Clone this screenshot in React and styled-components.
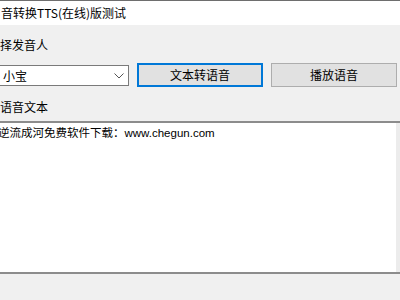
import React from "react";
import { useState } from "react";
import styled, { createGlobalStyle } from "styled-components";

const Global = createGlobalStyle`
  html, body {
    margin: 0;
    padding: 0;
    background: #f0f0f0;
    overflow: hidden;
  }
  * {
    box-sizing: border-box;
  }
`;

const Window = styled.div`
  width: 400px;
  height: 300px;
  display: flex;
  flex-direction: column;
  font-family: "Noto Sans CJK SC", "Noto Sans", sans-serif;
  font-size: 12px;
  color: #000;
  background: #f0f0f0;
  overflow: hidden;
`;

const TitleBar = styled.div`
  height: 25px;
  border-top: 1px solid #6e6e6e;
  background: #ffffff;
  display: flex;
  align-items: center;
  padding-left: 1px;
  line-height: 16px;
`;

const Body = styled.div`
  display: flex;
  flex-direction: column;
`;

const Label = styled.div`
  line-height: 16px;
  height: 16px;
  margin-top: ${(p) => p.$top}px;
  white-space: nowrap;
`;

const Row = styled.div`
  display: flex;
  align-items: flex-start;
  gap: 8px;
  margin-top: 10px;
  height: 24px;
`;

const Combo = styled.div`
  width: 130px;
  height: 21px;
  margin-top: 2px;
  margin-left: -1px;
  background: #fff;
  border: 1px solid #7a7a7a;
  display: flex;
  align-items: center;
  justify-content: space-between;
  padding: 0 4px 0 3px;
  line-height: 16px;
`;

const Button = styled.button`
  width: 126px;
  height: 24px;
  margin: 0;
  padding: 0;
  font: inherit;
  color: #000;
  background: #e1e1e1;
  border: ${(p) => (p.$focused ? "2px solid #0078d7" : "1px solid #adadad")};
  line-height: 16px;
  cursor: pointer;
`;

const TextBox = styled.div`
  margin-top: 6px;
  height: 153px;
  width: 402px;
  margin-left: -2px;
  border-top: 2px solid #8c8c8c;
  border-bottom: 2px solid #8c8c8c;
  display: flex;
`;

const TextArea = styled.textarea`
  flex: 1;
  height: 100%;
  border: none;
  outline: none;
  resize: none;
  margin: 0;
  padding: 2px 0 0 0;
  font-family: "Liberation Sans", "Noto Sans CJK SC", sans-serif;
  font-size: 11.5px;
  line-height: 16px;
  background: #fff;
  color: #000;
`;

const ScrollStrip = styled.div`
  width: 4px;
  background: #ececec;
`;

export default function App() {
  const [text, setText] = useState("逆流成河免费软件下载：www.chegun.com");

  return (
    <Window>
      <Global />
      <TitleBar>音转换TTS(在线)版测试</TitleBar>
      <Body>
        <Label $top={12}>择发音人</Label>
        <Row>
          <Combo>
            <span>小宝</span>
            <svg width="10" height="6" viewBox="0 0 10 6">
              <path d="M0.5 0.5 L5 5 L9.5 0.5" fill="none" stroke="#555" strokeWidth="1" />
            </svg>
          </Combo>
          <Button $focused>文本转语音</Button>
          <Button>播放语音</Button>
        </Row>
        <Label $top={12}>语音文本</Label>
        <TextBox>
          <TextArea value={text} onChange={(e) => setText(e.target.value)} />
          <ScrollStrip />
        </TextBox>
      </Body>
    </Window>
  );
}
